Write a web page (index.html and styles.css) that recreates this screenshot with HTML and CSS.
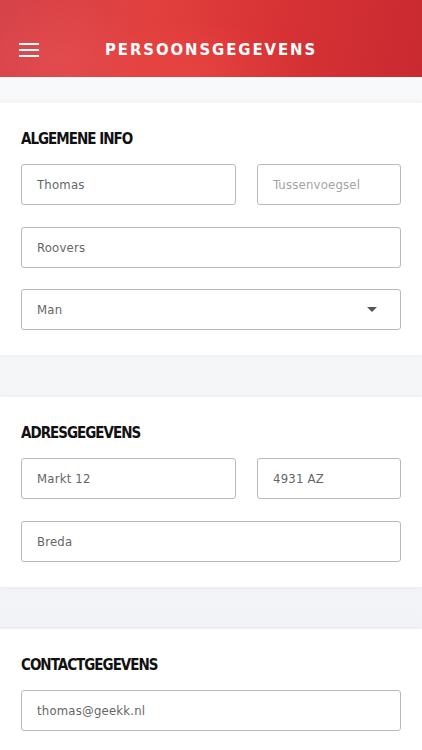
FILE: index.html
```html
<!DOCTYPE html>
<html lang="nl">
<head>
<meta charset="utf-8">
<title>Persoonsgegevens</title>
<link rel="stylesheet" href="styles.css">
</head>
<body>
<header class="topbar">
  <button class="menu" aria-label="Menu">
    <svg width="20" height="14" viewBox="0 0 20 14"><rect x="0" y="0" width="20" height="2" fill="#fff"/><rect x="0" y="6" width="20" height="2" fill="#fff"/><rect x="0" y="12" width="20" height="2" fill="#fff"/></svg>
  </button>
  <h1 class="title">PERSOONSGEGEVENS</h1>
</header>
<main class="content">
  <section class="card">
    <h2 class="card-title">ALGEMENE INFO</h2>
    <div class="row">
      <div class="field grow">Thomas</div>
      <div class="field small placeholder">Tussenvoegsel</div>
    </div>
    <div class="field">Roovers</div>
    <div class="field select">Man<span class="caret"></span></div>
  </section>
  <section class="card">
    <h2 class="card-title">ADRESGEGEVENS</h2>
    <div class="row">
      <div class="field grow">Markt 12</div>
      <div class="field small">4931 AZ</div>
    </div>
    <div class="field">Breda</div>
  </section>
  <section class="card">
    <h2 class="card-title">CONTACTGEGEVENS</h2>
    <div class="field">thomas@geekk.nl</div>
  </section>
</main>
</body>
</html>
```
FILE: styles.css
```css
html, body { margin: 0; padding: 0; }
body {
  width: 422px;
  height: 750px;
  overflow: hidden;
  background: #f4f5f8;
  font-family: "DejaVu Sans Condensed", "Liberation Sans", sans-serif;
}
.topbar {
  height: 77px;
  display: flex;
  align-items: center;
  padding: 22px 19px 0;
  box-sizing: border-box;
  background:
    radial-gradient(ellipse 120px 90px at 60px 60px, rgba(255,120,120,0.18), transparent 70%),
    radial-gradient(ellipse 160px 70px at 200px 70px, rgba(255,90,80,0.25), transparent 70%),
    linear-gradient(100deg, #d6434a 0%, #e2403f 35%, #d93436 60%, #c92a30 100%);
}
.menu {
  background: none;
  border: 0;
  padding: 0;
  width: 20px;
  height: 14px;
  display: flex;
}
.title {
  margin: 0 0 0 66px;
  color: #fff;
  font-family: "DejaVu Sans Condensed", sans-serif;
  font-weight: bold;
  font-size: 16.5px;
  letter-spacing: 1.95px;
}
.content {
  display: flex;
  flex-direction: column;
  gap: 42px;
  padding-top: 26px;
  background: linear-gradient(#f8f9fb, #f1f2f5);
}
.card {
  background: #fff;
  padding: 26px 21px 25px;
  display: flex;
  flex-direction: column;
  gap: 21.5px;
  box-shadow: 0 0 6px rgba(0,0,0,0.05);
}
.card-title {
  margin: 0 0 -6.5px;
  height: 20px;
  line-height: 20px;
  font-family: "DejaVu Sans Condensed", sans-serif;
  font-weight: bold;
  font-size: 15px;
  letter-spacing: -1px;
  color: #111;
}
.row {
  display: flex;
  gap: 21px;
}
.field {
  height: 41px;
  box-sizing: border-box;
  border: 1px solid #b9b9b9;
  border-radius: 3px;
  padding: 0 15px;
  display: flex;
  align-items: center;
  font-size: 13px;
  letter-spacing: 0.2px;
  color: #666;
}
.grow { flex: 1; }
.small { width: 144px; }
.placeholder { color: #a3a3a3; }
.select { justify-content: space-between; padding-right: 23px; }
.caret {
  width: 0;
  height: 0;
  border-left: 5px solid transparent;
  border-right: 5px solid transparent;
  border-top: 5px solid #555;
}
```
